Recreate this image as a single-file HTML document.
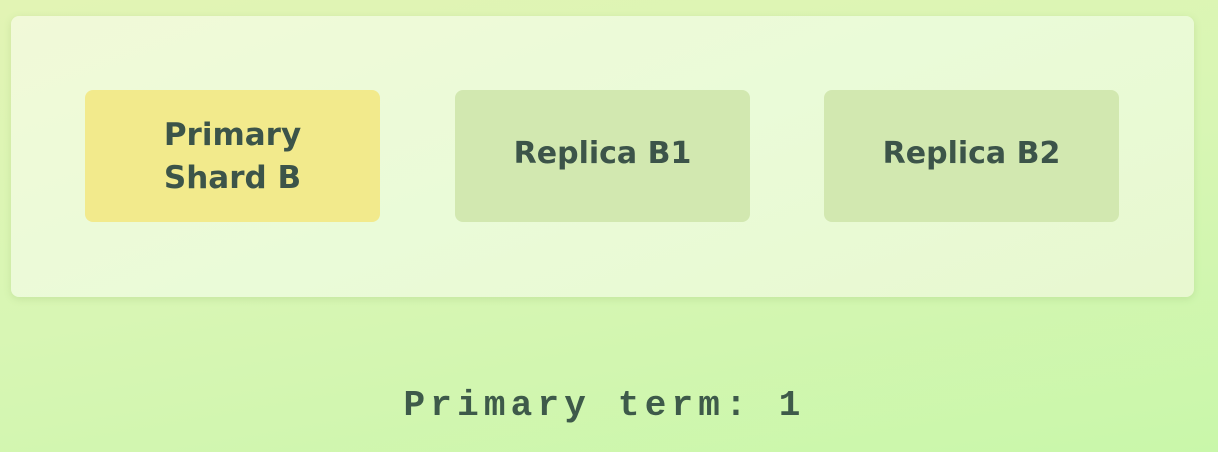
<!DOCTYPE html>
<html><head><style>
html,body{margin:0;padding:0}
body{width:1218px;height:452px;overflow:hidden;position:relative;
background:linear-gradient(170deg,#e2f4b4 0%,#d8f6b4 50%,#c9f7aa 100%);
font-family:"Liberation Sans",sans-serif;}
.card{position:absolute;left:11px;top:16px;width:1183px;height:281px;border-radius:8px;
background:linear-gradient(160deg,#f1f9d8 0%,#eafbd8 50%,#e8f8d0 100%);box-shadow:0 2px 8px rgba(120,160,80,.2);}
.b{position:absolute;top:90px;width:295px;height:132px;border-radius:8px;display:flex;align-items:center;justify-content:center;text-align:center;
font-size:30px;line-height:43px;color:#3c5449;font-weight:bold;font-family:"DejaVu Sans","Liberation Sans",sans-serif;padding-bottom:6px;box-sizing:border-box;}
.p{left:85px;background:#f2ea8c;padding-bottom:0;padding-top:2px;font-size:31px}
.r{background:#d2e8b0}
.t{position:absolute;top:385px;left:0;width:1209px;text-align:center;font-family:"Liberation Mono",monospace;font-weight:bold;font-size:36px;letter-spacing:5.2px;color:#3e5a4a;}
</style></head><body>
<div class="card"></div>
<div class="b p">Primary<br>Shard B</div>
<div class="b r" style="left:455px">Replica B1</div>
<div class="b r" style="left:824px">Replica B2</div>
<div class="t">Primary term: 1</div>
</body></html>
